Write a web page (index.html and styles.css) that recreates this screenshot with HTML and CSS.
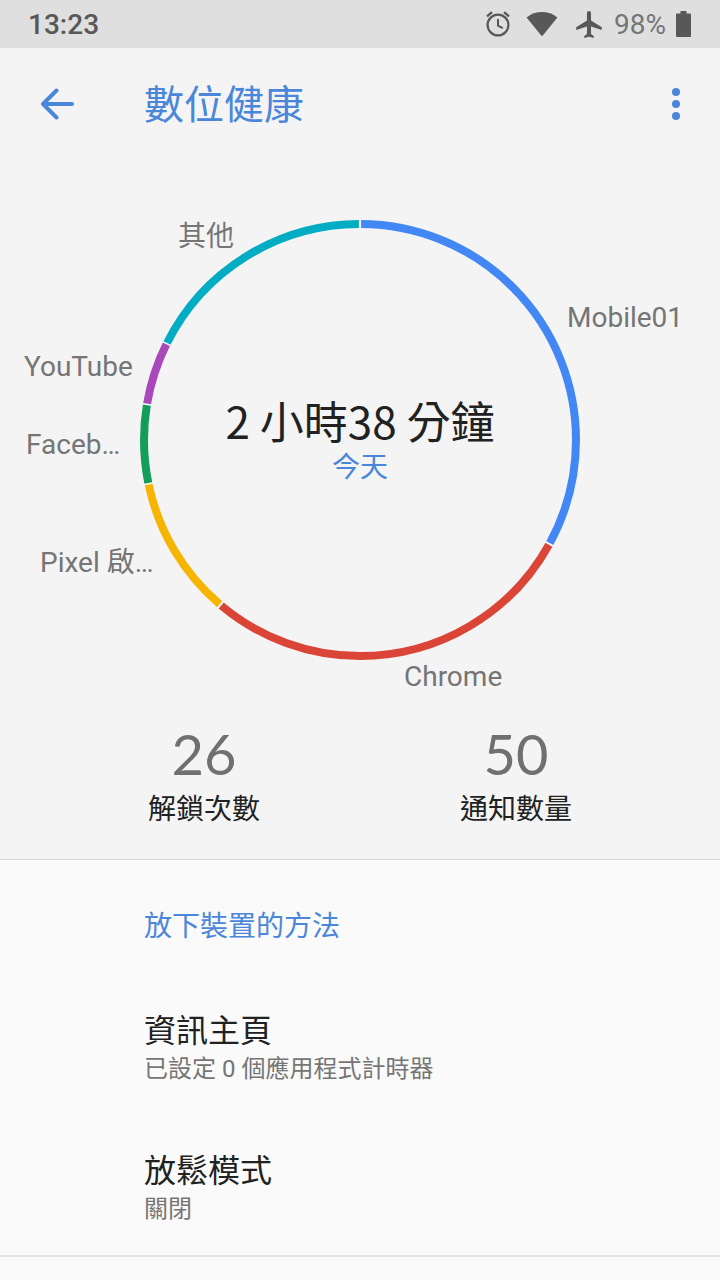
FILE: index.html
```
<!DOCTYPE html>
<html lang="zh-Hant-TW">
<head>
<meta charset="utf-8">
<meta name="viewport" content="width=device-width, initial-scale=1">
<title>數位健康</title>
<link rel="stylesheet" href="styles.css">
</head>
<body>
<div class="status-bar">
  <time class="clock">13:23</time>
  <div class="status-icons">
    <svg class="icon-alarm" viewBox="0 0 24 26" width="24" height="26" fill="none" stroke="#585858" aria-hidden="true">
      <circle cx="12" cy="14" r="10.4" stroke-width="2.2"/>
      <path d="M12 8v6.600l4.800 2.600" stroke-width="2"/>
      <path d="M1 5.400l5-4.200M23 5.400l-5-4.200" stroke-width="2.4"/>
    </svg>
    <svg class="icon-wifi" viewBox="0 0 32 26" width="32" height="26" fill="#585858" aria-hidden="true">
      <path d="M.6 6.400C9.800-.9 22.200-.9 31.400 6.400L17 24.300Q16 25.400 15 24.300Z"/>
    </svg>
    <svg class="icon-plane" viewBox="2 2 19 20" width="26" height="27" fill="#585858" aria-hidden="true">
      <path d="M21 16v-2l-8-5V3.500a1.500 1.500 0 0 0-3 0V9l-8 5v2l8-2.500V19l-2 1.500V22l3.500-1 3.500 1v-1.500L13 19v-5.500z"/>
    </svg>
    <span class="battery-level">98%</span>
    <svg class="icon-battery" viewBox="0 0 15 26" width="15" height="26" fill="#585858" aria-hidden="true">
      <path d="M4.500 0h6v2.500H14a1 1 0 0 1 1 1V25a1 1 0 0 1-1 1H1a1 1 0 0 1-1-1V3.500a1 1 0 0 1 1-1h3.500z"/>
    </svg>
  </div>
</div>

<main class="screen">
  <section class="overview">
    <header class="app-bar">
      <button class="icon-button" type="button" aria-label="返回">
        <svg viewBox="0 0 34 32" width="34" height="32" fill="none" stroke="#4a86da" stroke-width="4" stroke-linecap="round" stroke-linejoin="round" aria-hidden="true">
          <path d="M32 16H3M16.500 2.500L3 16L16.500 29.500"/>
        </svg>
      </button>
      <h1 class="title">數位健康</h1>
      <button class="icon-button" type="button" aria-label="更多選項">
        <svg viewBox="0 0 8 32" width="8" height="32" fill="#4a86da" aria-hidden="true">
          <circle cx="4" cy="4" r="4"/><circle cx="4" cy="16" r="4"/><circle cx="4" cy="28" r="4"/>
        </svg>
      </button>
    </header>

    <svg class="usage-chart" viewBox="0 0 720 560" role="img" aria-label="今天的使用時間">
      <g class="ring" transform="rotate(-90 360 280)">
        <circle class="track" cx="360" cy="280" r="216"/>
        <circle class="blue" cx="360" cy="280" r="216" pathLength="3600" stroke-dasharray="1182 2418" stroke-dashoffset="-3"/>
        <circle class="red" cx="360" cy="280" r="216" pathLength="3600" stroke-dasharray="1010 2590" stroke-dashoffset="-1190"/>
        <circle class="yellow" cx="360" cy="280" r="216" pathLength="3600" stroke-dasharray="376 3224" stroke-dashoffset="-2205"/>
        <circle class="green" cx="360" cy="280" r="216" pathLength="3600" stroke-dasharray="208 3392" stroke-dashoffset="-2585"/>
        <circle class="purple" cx="360" cy="280" r="216" pathLength="3600" stroke-dasharray="166 3434" stroke-dashoffset="-2797"/>
        <circle class="teal" cx="360" cy="280" r="216" pathLength="3600" stroke-dasharray="630 2970" stroke-dashoffset="-2967"/>
      </g>
      <g class="labels">
        <text x="178" y="86">其他</text>
        <text x="567" y="167">Mobile01</text>
        <text x="24" y="216">YouTube</text>
        <text x="26" y="294">Faceb…</text>
        <text x="40" y="412">Pixel 啟…</text>
        <text x="404" y="526">Chrome</text>
      </g>
      <text class="total" x="360" y="279">2 小時38 分鐘</text>
      <text class="day" x="360" y="317">今天</text>
    </svg>

    <dl class="stats">
      <div class="stat"><dt>解鎖次數</dt><dd>26</dd></div>
      <div class="stat"><dt>通知數量</dt><dd>50</dd></div>
    </dl>
  </section>

  <section class="settings">
    <h2 class="section-title">放下裝置的方法</h2>
    <div class="setting-list">
      <button class="setting" type="button">
        <span class="setting-name">資訊主頁</span>
        <span class="setting-detail">已設定 0 個應用程式計時器</span>
      </button>
      <button class="setting" type="button">
        <span class="setting-name">放鬆模式</span>
        <span class="setting-detail">關閉</span>
      </button>
    </div>
  </section>
</main>
</body>
</html>
```

FILE: styles.css
```
* {
  box-sizing: border-box;
}

body {
  margin: 0;
  min-height: 100vh;
  background: #fafafa;
  color: #212121;
  font-family: Roboto, "Noto Sans CJK TC", sans-serif;
  font-size: 28px;
}

button {
  border: 0;
  background: none;
  color: inherit;
  font: inherit;
}

.status-bar {
  display: flex;
  justify-content: space-between;
  align-items: center;
  height: 48px;
  padding: 0 29px 0 28px;
  background: #dfdfdf;
}

.clock {
  padding-top: 2px;
  color: #585858;
  font-weight: 500;
  line-height: 46px;
}

.status-icons {
  display: flex;
  align-items: center;
}

.icon-wifi {
  margin-left: 16px;
}

.icon-plane {
  margin-left: 18px;
}

.battery-level {
  margin: 0 10px 0 12px;
  padding-top: 2px;
  color: #757575;
  line-height: 46px;
}

.overview {
  background: #f4f4f4;
  border-bottom: 1px solid #d8d8d8;
}

.app-bar {
  display: flex;
  align-items: center;
  height: 112px;
  padding: 0 16px;
}

.icon-button {
  display: flex;
  justify-content: center;
  align-items: center;
  width: 82px;
  height: 80px;
  padding: 0;
}

.icon-button:last-child {
  width: 56px;
}

.title {
  flex: 1;
  margin: 0 0 0 46px;
  padding-top: 4px;
  color: #4a86da;
  font-size: 40px;
  font-weight: 400;
  line-height: 48px;
}

.usage-chart {
  display: block;
  width: 100%;
}

.ring {
  fill: none;
  stroke-width: 8px;
}

.track { stroke: #ffffff; }
.blue { stroke: #4387f4; }
.red { stroke: #db4538; }
.yellow { stroke: #f5b502; }
.green { stroke: #129d59; }
.purple { stroke: #a948bb; }
.teal { stroke: #02acc2; }

.labels {
  fill: #757575;
}

.total {
  fill: #212121;
  font-family: "Noto Sans CJK TC", sans-serif;
  font-size: 44px;
  text-anchor: middle;
}

.day {
  fill: #4a86da;
  text-anchor: middle;
}

.stats {
  display: grid;
  grid-template-columns: 1fr 1fr;
  margin: 0;
  padding: 2px 48px 29px;
}

.stat {
  display: flex;
  flex-direction: column-reverse;
  align-items: center;
  gap: 4px;
}

.stat dt {
  line-height: 40px;
}

.stat dd {
  margin: 0;
  color: #707070;
  font-family: Lato, sans-serif;
  font-size: 56px;
  line-height: 64px;
}

.settings {
  padding-top: 49px;
  border-bottom: 2px solid #e3e3e3;
}

.section-title {
  margin: 0 0 34px;
  padding: 0 32px 0 144px;
  color: #4a86da;
  font-size: 28px;
  font-weight: 400;
  line-height: 36px;
}

.setting-list {
  display: grid;
  gap: 4px;
}

.setting {
  display: flex;
  flex-direction: column;
  gap: 2px;
  width: 100%;
  padding: 32px 32px 30px 144px;
  text-align: left;
}

.setting-name {
  font-size: 32px;
  line-height: 40px;
}

.setting-detail {
  color: #757575;
  font-size: 24px;
  line-height: 32px;
}
```
